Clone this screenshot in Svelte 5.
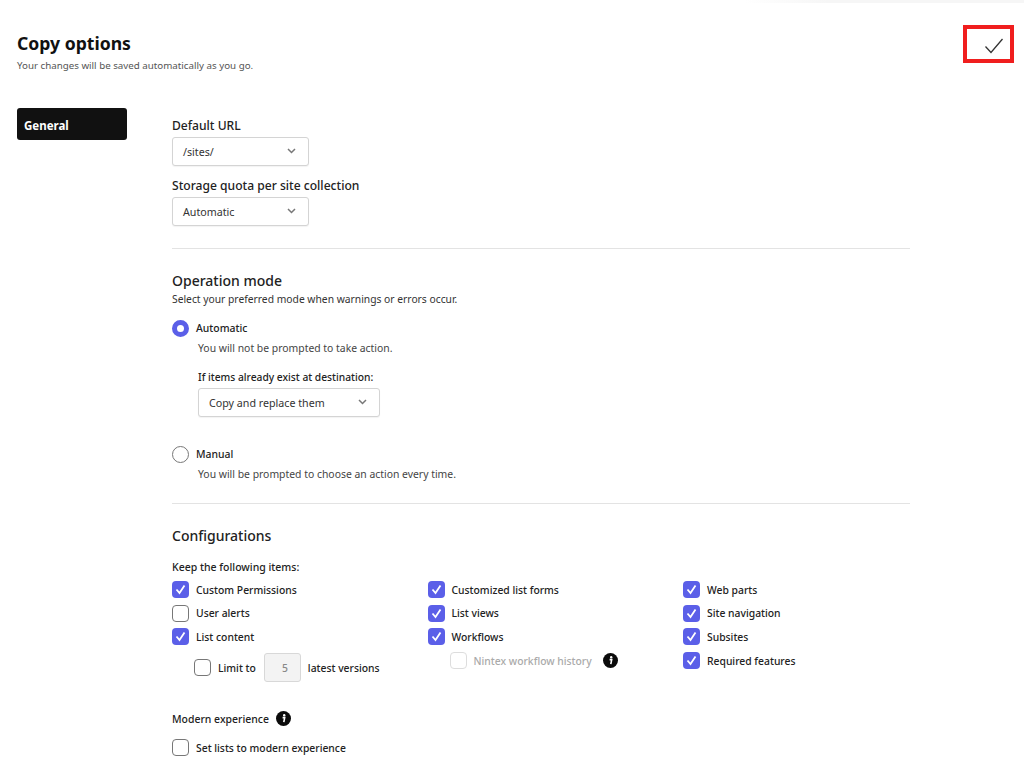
<script>
  const columns = [
    [
      { label: 'Custom Permissions', checked: true },
      { label: 'User alerts', checked: false },
      { label: 'List content', checked: true }
    ],
    [
      { label: 'Customized list forms', checked: true },
      { label: 'List views', checked: true },
      { label: 'Workflows', checked: true }
    ],
    [
      { label: 'Web parts', checked: true },
      { label: 'Site navigation', checked: true },
      { label: 'Subsites', checked: true },
      { label: 'Required features', checked: true }
    ]
  ];
</script>

{#snippet chevron()}
  <svg class="chevron" width="9" height="6" viewBox="0 0 9 6"><path d="M1 1l3.5 3.5L8 1" fill="none" stroke="#777" stroke-width="1.5" /></svg>
{/snippet}

{#snippet box(checked, extra = '')}
  <span class="box {extra}" class:checked>
    {#if checked}
      <svg width="17" height="17" viewBox="0 0 17 17"><path d="M4.5 8.5l3 3.5 5-7.5" fill="none" stroke="#fff" stroke-width="1.8" /></svg>
    {/if}
  </span>
{/snippet}

{#snippet info()}
  <svg class="info" width="15" height="15" viewBox="0 0 15 15">
    <circle cx="7.5" cy="7.5" r="7.5" fill="#0b0b0b" />
    <circle cx="8.2" cy="4.2" r="1.2" fill="#fff" />
    <path d="M6.6 6.6h2.1l-.9 4.6" fill="none" stroke="#fff" stroke-width="1.6" />
  </svg>
{/snippet}

<div class="topline"></div>

<div class="page">
  <header>
    <div>
      <h1>Copy options</h1>
      <p class="hint">Your changes will be saved automatically as you go.</p>
    </div>
    <button class="done" aria-label="Done">
      <svg width="20" height="16" viewBox="0 0 20 16"><path d="M1.5 8.5l5.5 6L18.5 1" fill="none" stroke="#333" stroke-width="1.3" /></svg>
    </button>
  </header>

  <div class="body">
    <nav><span class="tab">General</span></nav>

    <main>
      <section class="general">
        <div class="label">Default URL</div>
        <div class="select small">/sites/ {@render chevron()}</div>
        <div class="label second">Storage quota per site collection</div>
        <div class="select small">Automatic {@render chevron()}</div>
      </section>

      <section class="mode">
        <h2>Operation mode</h2>
        <p class="sub">Select your preferred mode when warnings or errors occur.</p>

        <div class="option first"><span class="radio on"></span>Automatic</div>
        <p class="note">You will not be prompted to take action.</p>
        <div class="indent">
          <div class="label exist">If items already exist at destination:</div>
          <div class="select wide">Copy and replace them {@render chevron()}</div>
        </div>

        <div class="option manual"><span class="radio"></span>Manual</div>
        <p class="note">You will be prompted to choose an action every time.</p>
      </section>

      <section class="config">
        <h2>Configurations</h2>
        <div class="keep">Keep the following items:</div>

        <div class="grid">
          {#each columns as col, i}
            <div class="col">
              {#each col as item}
                <div class="check">{@render box(item.checked)}{item.label}</div>
              {/each}
              {#if i === 0}
                <div class="check nested limit">
                  {@render box(false)}Limit to
                  <span class="num">5</span>
                  latest versions
                </div>
              {:else if i === 1}
                <div class="check nested muted">
                  {@render box(false, 'off')}Nintex workflow history
                  {@render info()}
                </div>
              {/if}
            </div>
          {/each}
        </div>

        <div class="modern">Modern experience {@render info()}</div>
        <div class="check">{@render box(false)}Set lists to modern experience</div>
      </section>
    </main>
  </div>
</div>

<style>
  :global(body) {
    margin: 0;
    background: #fff;
    overflow: hidden;
  }

  .page {
    padding: 33px 10px 0 17px;
    font-family: "Noto Sans", sans-serif;
    font-size: 10.4px;
    color: #222;
    height: 737px;
    overflow: hidden;
  }

  .topline {
    position: absolute;
    top: 0;
    right: 0;
    width: 280px;
    height: 3px;
    background: linear-gradient(to right, #fff, #f6f6f6 30%);
  }

  header {
    display: flex;
    justify-content: space-between;
    align-items: flex-start;
    height: 75px;
  }

  h1 {
    margin: 0;
    font-size: 17.6px;
    line-height: 20px;
    font-weight: 700;
    color: #111;
  }

  .hint {
    margin: 6px 0 0;
    font-size: 9.75px;
    line-height: 14px;
    color: #555;
  }

  .done {
    width: 51px;
    height: 38px;
    margin-top: -8px;
    padding: 3px 0 0 10px;
    box-sizing: border-box;
    border: 4px solid #f01e1e;
    background: #fff;
    display: flex;
    align-items: center;
    justify-content: center;
  }

  .body {
    display: flex;
  }

  nav {
    width: 155px;
    flex: none;
  }

  .tab {
    display: block;
    width: 110px;
    height: 32px;
    box-sizing: border-box;
    padding-left: 7px;
    background: #111;
    border-radius: 3px;
    color: #fff;
    font-size: 11.5px;
    font-weight: 700;
    line-height: 35px;
  }

  main {
    width: 738px;
  }

  section {
    border-bottom: 1px solid #e3e3e3;
  }

  .general {
    padding: 10px 0 22px;
  }

  .label {
    font-size: 12.1px;
    line-height: 16px;
    font-weight: 500;
    color: #222;
    margin-bottom: 3px;
  }

  .label.second {
    margin-top: 12px;
  }

  .select {
    display: flex;
    align-items: center;
    justify-content: space-between;
    box-sizing: border-box;
    height: 29px;
    padding: 0 12px 0 10px;
    border: 1px solid #d4d4d4;
    border-radius: 3px;
    box-shadow: 0 1px 1px rgba(0, 0, 0, 0.05);
    background: #fff;
    font-size: 10.7px;
    color: #333;
  }

  .select.small {
    width: 137px;
  }

  .select.wide {
    width: 182px;
  }

  .chevron {
    flex: none;
    margin-top: -2px;
  }

  .mode {
    padding: 23px 0 21px;
  }

  h2 {
    margin: 0;
    font-size: 14px;
    line-height: 18px;
    font-weight: 500;
    color: #222;
  }

  .sub {
    margin: 2px 0 0;
    font-size: 10.3px;
    line-height: 15px;
    color: #333;
  }

  .option {
    display: flex;
    align-items: center;
    font-weight: 500;
    height: 18px;
  }

  .option.first {
    margin-top: 12px;
  }

  .option.manual {
    margin-top: 28px;
  }

  .radio {
    width: 17px;
    height: 17px;
    box-sizing: border-box;
    border: 1px solid #777;
    border-radius: 50%;
    margin-right: 7px;
    background: #fff;
  }

  .radio.on {
    border: 5px solid #5b5fe8;
  }

  .note {
    margin: 4px 0 0 26px;
    line-height: 15px;
    color: #444;
  }

  .indent {
    margin: 13px 0 0 26px;
  }

  .label.exist {
    font-size: 10.25px;
  }

  .config {
    border-bottom: 0;
    padding-top: 23px;
  }

  .keep {
    margin-top: 15px;
    font-size: 10.5px;
    font-weight: 500;
    line-height: 15px;
  }

  .grid {
    display: grid;
    grid-template-columns: 255.5px 255.5px 1fr;
    margin-top: 3px;
  }

  .check {
    display: flex;
    align-items: center;
    height: 23.6px;
    font-size: 10.35px;
    font-weight: 500;
    color: #222;
  }

  .box {
    flex: none;
    width: 17px;
    height: 17px;
    box-sizing: border-box;
    border: 1px solid #777;
    border-radius: 4px;
    margin-right: 7px;
    background: #fff;
    position: relative;
  }

  .box svg {
    position: absolute;
    left: -1px;
    top: -1px;
  }

  .box.checked {
    border: 0;
    background: #5b5fe8;
  }

  .box.checked svg {
    left: 0;
    top: 0;
  }

  .box.off {
    border-color: #ddd;
  }

  .nested {
    padding-left: 22px;
  }

  .limit {
    height: 38px;
  }

  .limit .num {
    box-sizing: border-box;
    width: 37px;
    height: 29px;
    margin: 0 7px 0 8px;
    padding-right: 12px;
    text-align: right;
    line-height: 28px;
    background: #f3f3f3;
    border: 1px solid #d8d8d8;
    border-radius: 3px;
    color: #888;
  }

  .muted {
    color: #aaa;
  }

  .info {
    flex: none;
    margin-left: 11px;
  }

  .modern {
    display: flex;
    align-items: center;
    margin-top: 23px;
    height: 18px;
    margin-bottom: 8px;
    font-size: 10.45px;
    font-weight: 500;
  }

  .modern .info {
    margin-left: 7px;
  }
</style>
